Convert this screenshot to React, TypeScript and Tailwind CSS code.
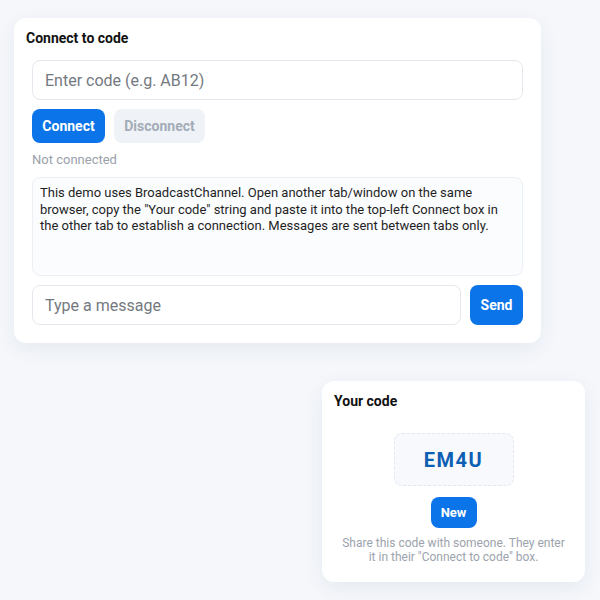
export default function App() {
   const font = { fontFamily: 'Roboto, "Liberation Sans", sans-serif' }

   return (
      <div className="min-h-[600px] w-[600px] bg-[#f5f7fb] pt-[18px] pb-[19px]" style={font}>
         {/* 연결 카드 */}
         <div className="ml-[14px] w-[527px] rounded-xl bg-white px-[12px] pt-[10px] pb-[18px] shadow-[0_6px_20px_rgba(30,50,90,0.07)]">
            <h2 className="text-[14px] leading-5 font-bold text-[#111]">Connect to code</h2>
            <div className="mt-[12px] px-[6px]">
               <input
                  className="h-[40px] w-full rounded-lg border border-[#e4e8ee] bg-white px-[12px] text-[16px] text-[#222] outline-none placeholder:text-[#74797f]"
                  placeholder="Enter code (e.g. AB12)"
               />
               <div className="mt-[9px] flex gap-[9px]">
                  <button className="h-[34px] w-[73px] rounded-lg bg-[#0b74e8] text-[14px] font-bold text-white">Connect</button>
                  <button className="h-[34px] w-[91px] rounded-lg bg-[#eff2f6] text-[14px] font-bold text-[#a3acb7]">Disconnect</button>
               </div>
               <div className="mt-[9px] text-[13px] leading-4 text-[#9aa1aa]">Not connected</div>
               <div className="mt-[9px] h-[99px] rounded-lg border border-[#eceff4] bg-[#fbfcfe] px-[7px] pt-[7px] text-[13px] leading-[16.5px] text-[#1f1f1f]">
                  This demo uses BroadcastChannel. Open another tab/window on the same browser, copy the "Your code" string and paste it into the top-left Connect box in the other tab to establish a connection. Messages are sent between tabs only.
               </div>
               <div className="mt-[9px] flex gap-[9px]">
                  <input
                     className="h-[40px] flex-1 rounded-lg border border-[#e4e8ee] bg-white px-[12px] text-[16px] text-[#222] outline-none placeholder:text-[#74797f]"
                     placeholder="Type a message"
                  />
                  <button className="h-[40px] w-[53px] rounded-lg bg-[#0b74e8] text-[14px] font-bold text-white">Send</button>
               </div>
            </div>
         </div>

         {/* 내 코드 카드 */}
         <div className="mt-[38px] ml-[322px] w-[263px] rounded-xl bg-white px-[12px] pt-[10px] pb-[18px] shadow-[0_6px_20px_rgba(30,50,90,0.07)]">
            <h2 className="text-[14px] leading-5 font-bold text-[#111]">Your code</h2>
            <div className="mt-[22px] flex flex-col items-center">
               <div className="flex h-[53px] w-[120px] items-center justify-center rounded-lg border border-dashed border-[#e3e8f0] bg-[#f7f9fc] text-[20px] font-bold tracking-[1.5px] text-[#0d5fb3]">
                  EM4U
               </div>
               <button className="mt-[11px] h-[31px] w-[46px] rounded-lg bg-[#0b74e8] text-[13px] font-bold text-white">New</button>
               <p className="mt-[8px] max-w-[230px] text-center text-[12px] leading-[14px] text-[#9ca3ad]">
                  Share this code with someone. They enter it in their "Connect to code" box.
               </p>
            </div>
         </div>
      </div>
   )
}
